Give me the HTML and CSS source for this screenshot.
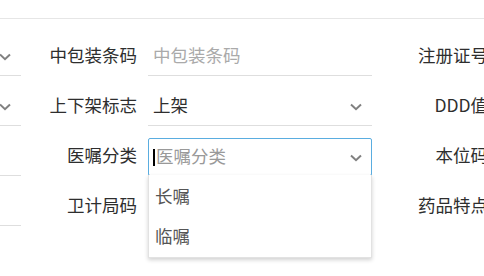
FILE: index.html
```html
<!DOCTYPE html>
<html lang="zh-CN">
<head>
    <meta charset="UTF-8">
    <meta name="viewport" content="width=device-width, initial-scale=1.0">
    <title>药品信息</title>
    <link rel="stylesheet" href="styles.css">
</head>
<body>
    <div class="topbar"></div>

    <div class="form">
        <div class="col">
            <div class="field">
                <label>剂型</label>
                <div class="control select"><span class="value">片剂</span><svg class="arrow" width="12" height="8" viewBox="0 0 12 8"><path d="M1 1.5L6 6.2L11 1.5"/></svg></div>
            </div>
            <div class="field">
                <label>药品分类</label>
                <div class="control select"><span class="value">西药</span><svg class="arrow" width="12" height="8" viewBox="0 0 12 8"><path d="M1 1.5L6 6.2L11 1.5"/></svg></div>
            </div>
            <div class="field">
                <label>批准文号</label>
                <div class="control"><span class="placeholder">批准文号</span></div>
            </div>
            <div class="field">
                <label>规格</label>
                <div class="control"><span class="placeholder">规格</span></div>
            </div>
        </div>

        <div class="col">
            <div class="field">
                <label>中包装条码</label>
                <div class="control"><span class="placeholder">中包装条码</span></div>
            </div>
            <div class="field">
                <label>上下架标志</label>
                <div class="control select"><span class="value">上架</span><svg class="arrow" width="12" height="8" viewBox="0 0 12 8"><path d="M1 1.5L6 6.2L11 1.5"/></svg></div>
            </div>
            <div class="field">
                <label>医嘱分类</label>
                <div class="control select focused">
                    <span class="placeholder"><span class="caret"></span>医嘱分类</span>
                    <svg class="arrow" width="12" height="8" viewBox="0 0 12 8"><path d="M1 1.5L6 6.2L11 1.5"/></svg>
                    <ul class="dropdown">
                        <li>长嘱</li>
                        <li>临嘱</li>
                    </ul>
                </div>
            </div>
            <div class="field">
                <label>卫计局码</label>
                <div class="control"><span class="placeholder">卫计局码</span></div>
            </div>
        </div>

        <div class="col">
            <div class="field">
                <label>注册证号</label>
                <div class="control"><span class="placeholder">注册证号</span></div>
            </div>
            <div class="field">
                <label>DDD值</label>
                <div class="control"><span class="placeholder">DDD值</span></div>
            </div>
            <div class="field">
                <label>本位码</label>
                <div class="control"><span class="placeholder">本位码</span></div>
            </div>
            <div class="field">
                <label>药品特点</label>
                <div class="control"><span class="placeholder">药品特点</span></div>
            </div>
        </div>
    </div>
</body>
</html>
```

FILE: styles.css
```css
html, body {
    height: 100%;
}
body {
    margin: 0;
    font-family: "Noto Sans CJK SC", "Noto Sans", sans-serif;
    font-size: 17.5px;
    color: #2e2e2e;
    background: #fff;
    overflow: hidden;
}
.topbar {
    height: 18px;
    border-bottom: 1px solid #e6e6e6;
}
.form {
    display: flex;
    margin-left: -326px;
    padding-top: 19px;
    padding-bottom: 60px;
}
.col {
    flex: none;
    width: 347px;
    margin-right: 4px;
    display: flex;
    flex-direction: column;
    gap: 12px;
}
.field {
    display: flex;
    height: 38px;
}
.field label {
    flex: none;
    width: 112px;
    padding-right: 11px;
    text-align: right;
    line-height: 34px;
    white-space: nowrap;
}
.control {
    position: relative;
    flex: none;
    width: 224px;
    height: 38px;
    box-sizing: border-box;
    border-bottom: 1px solid #dedede;
    display: flex;
    justify-content: space-between;
    padding: 0 10px 0 5px;
    line-height: 34px;
}
.placeholder {
    color: #aaa;
    white-space: nowrap;
}
.value {
    color: #2e2e2e;
}
.arrow {
    align-self: center;
    margin-top: 1px;
}
.arrow path {
    fill: none;
    stroke: #808080;
    stroke-width: 2;
}
.control.focused {
    border: 1px solid #5aade0;
    border-radius: 2px;
    padding: 0 9px 0 4px;
}
.focused .placeholder {
    color: #999;
}
.caret {
    display: inline-block;
    width: 2px;
    height: 17px;
    margin-right: 1px;
    background: #000;
    vertical-align: -3px;
}
.dropdown {
    position: absolute;
    top: 100%;
    left: -1px;
    width: 224px;
    box-sizing: border-box;
    margin: 0;
    padding: 0 0 2px;
    list-style: none;
    background: #fff;
    border: 1px solid #e2e2e2;
    border-top: none;
    box-shadow: 0 2px 4px rgba(0, 0, 0, 0.18);
    z-index: 10;
}
.dropdown li {
    height: 40px;
    line-height: 42px;
    padding-left: 6px;
    color: #555;
}
```
